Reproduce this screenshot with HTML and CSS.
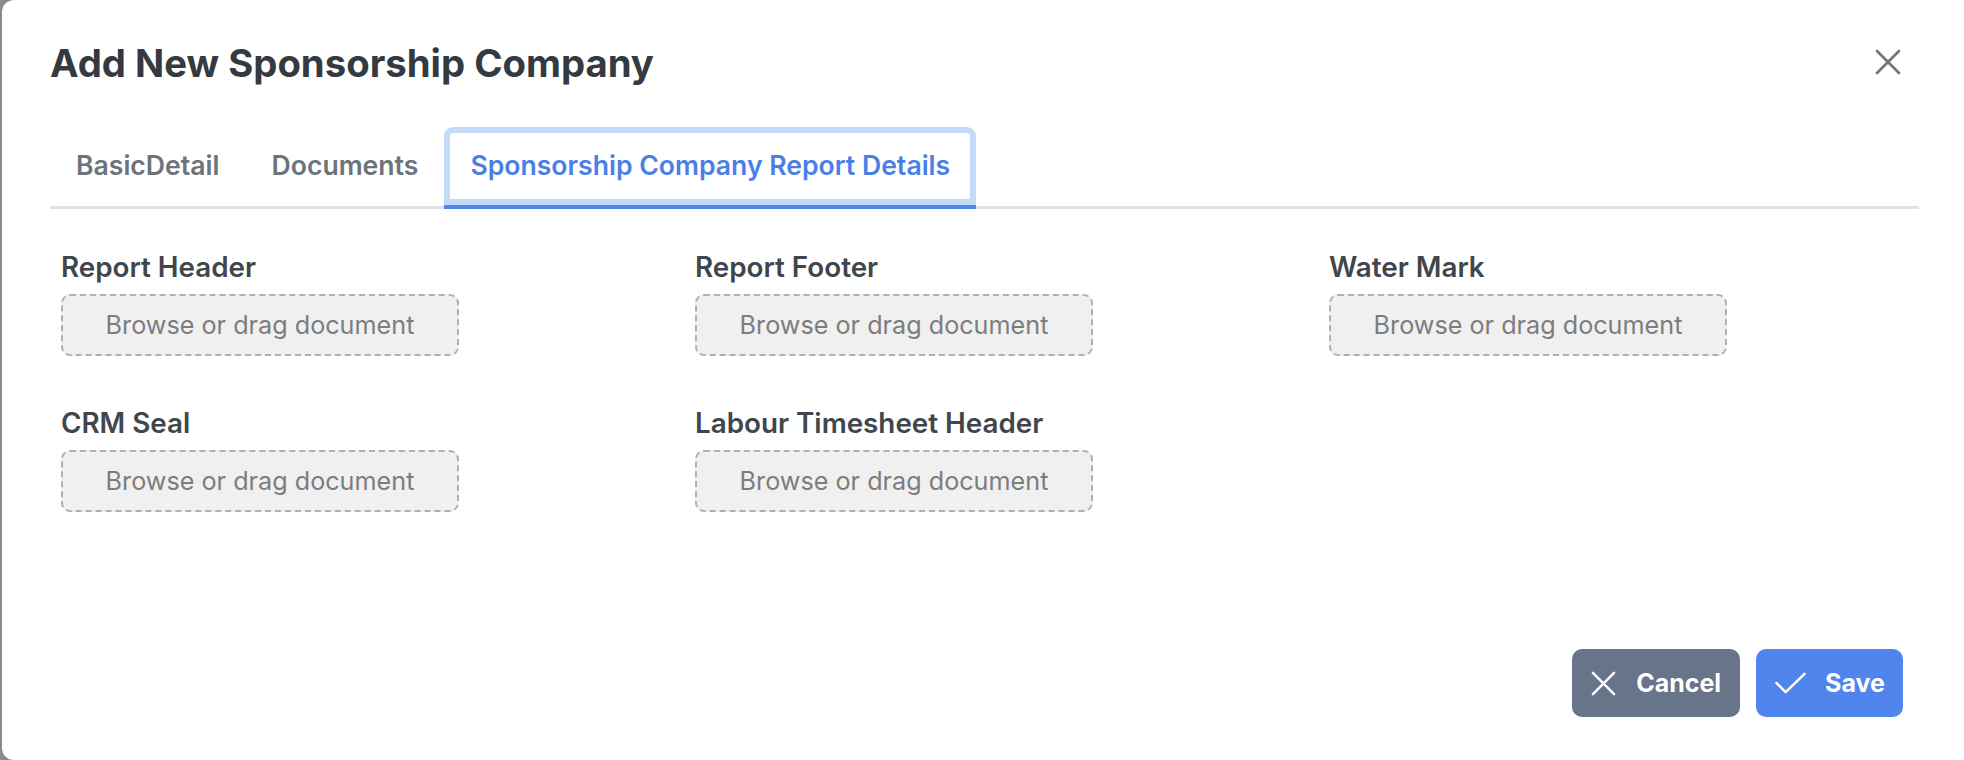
FILE: index.html
```html
<!DOCTYPE html>
<html lang="en">
<head>
<meta charset="utf-8">
<title>Add New Sponsorship Company</title>
<link rel="stylesheet" href="styles.css">
</head>
<body>
<div class="backdrop">
  <div class="modal">
    <div class="modal-header">
      <h1 class="modal-title">Add New Sponsorship Company</h1>
      <button class="close-btn" aria-label="Close">
        <svg viewBox="0 0 26 26" width="26" height="26"><path d="M2 2 L24 24 M24 2 L2 24" stroke="#6c757d" stroke-width="2.6" stroke-linecap="round" fill="none"/></svg>
      </button>
    </div>
    <div class="tabs">
      <div class="tab">BasicDetail</div>
      <div class="tab">Documents</div>
      <div class="tab active">Sponsorship Company Report Details</div>
    </div>
    <div class="fields">
      <div class="field">
        <div class="field-label">Report Header</div>
        <div class="dropzone">Browse or drag document</div>
      </div>
      <div class="field">
        <div class="field-label">Report Footer</div>
        <div class="dropzone">Browse or drag document</div>
      </div>
      <div class="field">
        <div class="field-label">Water Mark</div>
        <div class="dropzone">Browse or drag document</div>
      </div>
      <div class="field">
        <div class="field-label">CRM Seal</div>
        <div class="dropzone">Browse or drag document</div>
      </div>
      <div class="field">
        <div class="field-label">Labour Timesheet Header</div>
        <div class="dropzone">Browse or drag document</div>
      </div>
    </div>
    <div class="footer">
      <button class="btn btn-cancel">
        <svg class="btn-icon" viewBox="0 0 26 26" width="25" height="25"><path d="M2 2 L24 24 M24 2 L2 24" stroke="#fff" stroke-width="2.6" stroke-linecap="round" fill="none"/></svg>
        <span>Cancel</span>
      </button>
      <button class="btn btn-save">
        <svg class="btn-icon" viewBox="0 0 32 22" width="31" height="22"><path d="M1.5 11 L11 20.5 L30.5 1.5" stroke="#fff" stroke-width="2.6" stroke-linecap="round" stroke-linejoin="round" fill="none"/></svg>
        <span>Save</span>
      </button>
    </div>
  </div>
</div>
</body>
</html>
```

FILE: styles.css
```css
* { box-sizing: border-box; }

html, body {
  margin: 0;
  padding: 0;
  height: 100%;
}

body {
  background: #8a8a8a;
  font-family: Inter, "Noto Sans", "Liberation Sans", sans-serif;
  overflow: hidden;
}

.backdrop {
  height: 100%;
  padding-left: 2px;
}

.modal {
  background: #ffffff;
  height: 100%;
  border-top-left-radius: 12px;
  border-bottom-left-radius: 12px;
  padding: 41px 44px 0 48px;
}

.modal-header {
  display: flex;
  justify-content: space-between;
  align-items: flex-start;
}

.modal-title {
  margin: 0;
  font-size: 38.3px;
  line-height: 44px;
  font-weight: 700;
  color: #343a40;
}

.close-btn {
  background: none;
  border: 0;
  padding: 0;
  margin-top: 8px;
  margin-right: 19px;
  width: 26px;
  height: 26px;
  display: flex;
}

.tabs {
  display: flex;
  margin-top: 42px;
  border-bottom: 3px solid #dee2e6;
  width: 1869px;
}

.tab {
  font-size: 26.6px;
  line-height: 32px;
  font-weight: 600;
  color: #6c737b;
  padding: 22px 26px 24px;
  border-bottom: 4px solid transparent;
  margin-bottom: -3px;
  border-radius: 9px 9px 0 0;
}

.tab.active {
  color: #4a80e6;
  border-bottom-color: #4f84ea;
  box-shadow: inset 0 0 0 6px #c4daf9;
}

.fields {
  display: grid;
  grid-template-columns: repeat(3, 634px);
  row-gap: 51px;
  padding-top: 42px;
  padding-left: 11px;
}

.field {
  display: flex;
  flex-direction: column;
  align-items: flex-start;
}

.field-label {
  font-size: 27.8px;
  line-height: 32px;
  font-weight: 600;
  color: #41464c;
  margin-bottom: 11px;
}

.dropzone {
  width: 398px;
  height: 62px;
  border: 2px dashed #b0b0b0;
  border-radius: 9px;
  background: #f0f0f0;
  color: #7d7d7d;
  font-size: 25.2px;
  font-weight: 400;
  display: flex;
  align-items: center;
  justify-content: center;
}

.footer {
  display: flex;
  justify-content: flex-end;
  gap: 16px;
  margin-top: 137px;
  padding-right: 17px;
}

.btn {
  display: flex;
  align-items: center;
  height: 68px;
  border: 0;
  border-radius: 10px;
  color: #ffffff;
  font-family: Inter, "Noto Sans", "Liberation Sans", sans-serif;
  font-size: 25px;
  font-weight: 700;
}

.btn-cancel {
  background: #687489;
  padding: 0 19px 0 19px;
  gap: 20px;
}

.btn-save {
  background: #4f85ed;
  padding: 0 18px 0 19px;
  gap: 19px;
}

.btn-icon { display: block; }
```
